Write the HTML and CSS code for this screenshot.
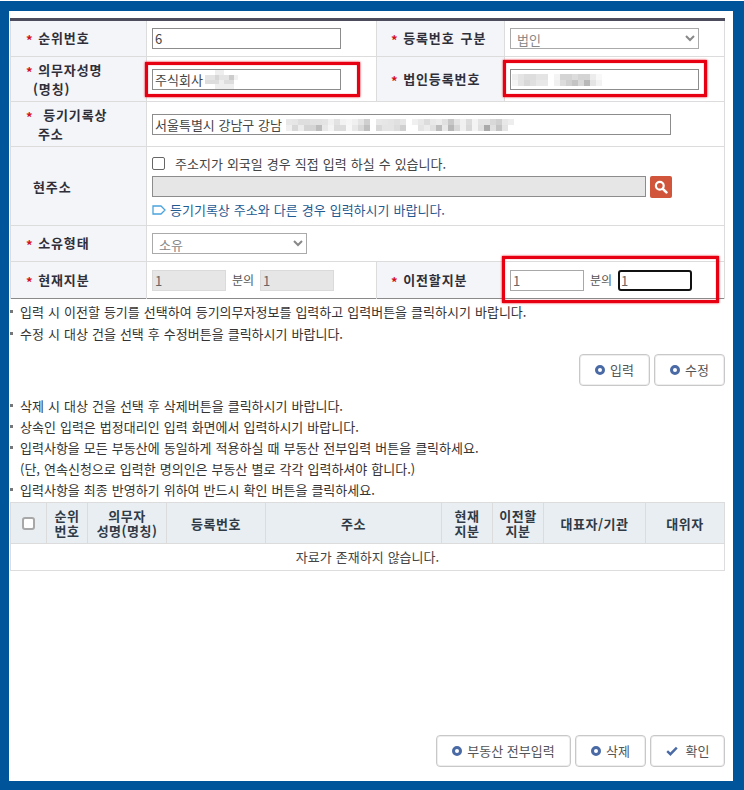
FILE: index.html
```html
<!DOCTYPE html>
<html lang="ko">
<head>
<meta charset="utf-8">
<title>등기의무자 입력</title>
<link rel="stylesheet" href="styles.css">
</head>
<body>
<main class="panel">
  <section class="form-wrap">
    <table class="form">
      <colgroup><col class="c1"><col class="c2"><col class="c3"><col></colgroup>
      <tr class="r1">
        <th><i>*</i> 순위번호</th>
        <td><input class="text w189" value="6"></td>
        <th class="th2"><i>*</i> 등록번호 구분</th>
        <td><select class="sel w189"><option>법인</option></select></td>
      </tr>
      <tr class="r2">
        <th><i>*</i> 의무자성명<br><span class="in1">(명칭)</span></th>
        <td><div class="masked"><input class="text w189" value="주식회사">
          <svg class="mosaic m-name" viewBox="0 0 8 4" aria-hidden="true"><rect x="2" width="2" height="1" fill="#eee"/><rect y="1" width="6" height="1" fill="#e4e4e4"/><rect x="2" y="1" width="1" height="1" fill="#d6d6d6"/><rect x="5" y="1" width="1" height="1" fill="#ccc"/><rect x="6" y="1" width="1" height="1" fill="#f2f2f2"/><rect y="2" width="6" height="1" fill="#ddd"/><rect x="3" y="2" width="1" height="1" fill="#eee"/><rect x="2" y="3" width="4" height="1" fill="#eee"/></svg></div></td>
        <th class="th2"><i>*</i> 법인등록번호</th>
        <td><div class="masked"><input class="text w189">
          <svg class="mosaic m-reg" viewBox="0 0 15 2" aria-hidden="true"><rect x="0" y="0" width="1" height="1" fill="#eee"/><rect x="1" y="0" width="1" height="1" fill="#e4e4e4"/><rect x="2" y="0" width="2" height="1" fill="#ddd"/><rect x="4" y="0" width="2" height="1" fill="#e4e4e4"/><rect x="7" y="0" width="1" height="1" fill="#f4f4f4"/><rect x="8" y="0" width="2" height="1" fill="#d4d4d4"/><rect x="10" y="0" width="1" height="1" fill="#dcdcdc"/><rect x="11" y="0" width="2" height="1" fill="#d4d4d4"/><rect x="13" y="0" width="1" height="1" fill="#ececec"/><rect x="14" y="0" width="1" height="1" fill="#f8f8f8"/><rect x="0" y="1" width="1" height="1" fill="#f4f4f4"/><rect x="1" y="1" width="1" height="1" fill="#e4e4e4"/><rect x="2" y="1" width="1" height="1" fill="#d8d8d8"/><rect x="3" y="1" width="1" height="1" fill="#e0e0e0"/><rect x="4" y="1" width="2" height="1" fill="#e8e8e8"/><rect x="7" y="1" width="1" height="1" fill="#f0f0f0"/><rect x="8" y="1" width="1" height="1" fill="#dcdcdc"/><rect x="9" y="1" width="1" height="1" fill="#d0d0d0"/><rect x="10" y="1" width="1" height="1" fill="#c4c4c4"/><rect x="11" y="1" width="1" height="1" fill="#d8d8d8"/><rect x="12" y="1" width="1" height="1" fill="#b8b8b8"/><rect x="13" y="1" width="1" height="1" fill="#e4e4e4"/><rect x="14" y="1" width="1" height="1" fill="#f2f2f2"/></svg></div></td>
      </tr>
      <tr class="r3">
        <th><span class="sp-star"><i>*</i></span> 등기기록상<br><span class="in2">주소</span></th>
        <td colspan="3"><div class="masked"><input class="text w519" value="서울특별시 강남구 강남">
          <svg class="mosaic m-addr" viewBox="0 0 38 2" aria-hidden="true"><rect x="0" y="0" width="1" height="1" fill="#e8e8e8"/><rect x="1" y="0" width="1" height="1" fill="#e6e6e6"/><rect x="2" y="0" width="2" height="1" fill="#dedede"/><rect x="4" y="0" width="2" height="1" fill="#e2e2e2"/><rect x="6" y="0" width="1" height="1" fill="#e4e4e4"/><rect x="7" y="0" width="1" height="1" fill="#f0f0f0"/><rect x="8" y="0" width="1" height="1" fill="#e2e2e2"/><rect x="9" y="0" width="1" height="1" fill="#f2f2f2"/><rect x="10" y="0" width="1" height="1" fill="#f6f6f6"/><rect x="11" y="0" width="1" height="1" fill="#f0f0f0"/><rect x="12" y="0" width="1" height="1" fill="#e4e4e4"/><rect x="13" y="0" width="1" height="1" fill="#cfcfcf"/><rect x="15" y="0" width="1" height="1" fill="#e8e8e8"/><rect x="16" y="0" width="1" height="1" fill="#e6e6e6"/><rect x="17" y="0" width="1" height="1" fill="#e4e4e4"/><rect x="18" y="0" width="1" height="1" fill="#e0e0e0"/><rect x="19" y="0" width="1" height="1" fill="#e6e6e6"/><rect x="21" y="0" width="1" height="1" fill="#f0f0f0"/><rect x="22" y="0" width="1" height="1" fill="#e8e8e8"/><rect x="23" y="0" width="1" height="1" fill="#dcdcdc"/><rect x="24" y="0" width="1" height="1" fill="#e8e8e8"/><rect x="25" y="0" width="1" height="1" fill="#ececec"/><rect x="26" y="0" width="1" height="1" fill="#e0e0e0"/><rect x="27" y="0" width="1" height="1" fill="#c8c8c8"/><rect x="28" y="0" width="1" height="1" fill="#e4e4e4"/><rect x="29" y="0" width="1" height="1" fill="#f0f0f0"/><rect x="30" y="0" width="1" height="1" fill="#dcdcdc"/><rect x="31" y="0" width="1" height="1" fill="#f4f4f4"/><rect x="32" y="0" width="2" height="1" fill="#e4e4e4"/><rect x="34" y="0" width="1" height="1" fill="#d8d8d8"/><rect x="35" y="0" width="1" height="1" fill="#d0d0d0"/><rect x="36" y="0" width="1" height="1" fill="#e8e8e8"/><rect x="37" y="0" width="1" height="1" fill="#eee"/><rect x="0" y="1" width="1" height="1" fill="#f0f0f0"/><rect x="1" y="1" width="1" height="1" fill="#d8d8d8"/><rect x="2" y="1" width="1" height="1" fill="#ececec"/><rect x="3" y="1" width="2" height="1" fill="#d4d4d4"/><rect x="5" y="1" width="1" height="1" fill="#bdbdbd"/><rect x="6" y="1" width="1" height="1" fill="#e8e8e8"/><rect x="7" y="1" width="1" height="1" fill="#f4f4f4"/><rect x="8" y="1" width="2" height="1" fill="#dcdcdc"/><rect x="10" y="1" width="1" height="1" fill="#f8f8f8"/><rect x="11" y="1" width="1" height="1" fill="#e8e8e8"/><rect x="12" y="1" width="1" height="1" fill="#d8d8d8"/><rect x="13" y="1" width="1" height="1" fill="#c0c0c0"/><rect x="15" y="1" width="1" height="1" fill="#d8d8d8"/><rect x="16" y="1" width="2" height="1" fill="#e4e4e4"/><rect x="18" y="1" width="1" height="1" fill="#dcdcdc"/><rect x="19" y="1" width="1" height="1" fill="#d0d0d0"/><rect x="22" y="1" width="1" height="1" fill="#e4e4e4"/><rect x="23" y="1" width="1" height="1" fill="#ececec"/><rect x="24" y="1" width="1" height="1" fill="#e0e0e0"/><rect x="25" y="1" width="1" height="1" fill="#bdbdbd"/><rect x="26" y="1" width="1" height="1" fill="#e8e8e8"/><rect x="27" y="1" width="1" height="1" fill="#b8b8b8"/><rect x="28" y="1" width="1" height="1" fill="#d8d8d8"/><rect x="29" y="1" width="1" height="1" fill="#f0f0f0"/><rect x="30" y="1" width="1" height="1" fill="#d8d8d8"/><rect x="31" y="1" width="1" height="1" fill="#f4f4f4"/><rect x="32" y="1" width="1" height="1" fill="#e0e0e0"/><rect x="33" y="1" width="1" height="1" fill="#aaa"/><rect x="34" y="1" width="1" height="1" fill="#e0e0e0"/><rect x="35" y="1" width="1" height="1" fill="#c4c4c4"/><rect x="36" y="1" width="1" height="1" fill="#e4e4e4"/></svg></div></td>
      </tr>
      <tr class="r4">
        <th><span class="in3">현주소</span></th>
        <td colspan="3" class="addr">
          <label class="chk-line"><input type="checkbox" class="chk"> 주소지가 외국일 경우 직접 입력 하실 수 있습니다.</label>
          <div class="search-line">
            <input class="text locked w494" disabled>
            <button class="search" type="button" aria-label="검색"><svg viewBox="0 0 14 14" width="14" height="14"><circle cx="5.8" cy="5.8" r="3.9" fill="none" stroke="#fff" stroke-width="2.2"/><path d="M8.8 8.8 12.4 12.4" stroke="#fff" stroke-width="2.6" stroke-linecap="round"/></svg></button>
          </div>
          <p class="hint"><svg viewBox="0 0 14 10" width="14" height="10" aria-hidden="true"><path d="M1 1h8l4 4-4 4H1z" fill="none" stroke="#4aa3dc" stroke-width="1.3"/></svg>등기기록상 주소와 다른 경우 입력하시기 바랍니다.</p>
        </td>
      </tr>
      <tr class="r5">
        <th><i>*</i> 소유형태</th>
        <td colspan="3"><select class="sel w155"><option>소유</option></select></td>
      </tr>
      <tr class="r6">
        <th><i>*</i> 현재지분</th>
        <td><div class="share"><input class="text locked-s w74" value="1" disabled><span>분의</span><input class="text locked-s w74" value="1" disabled></div></td>
        <th class="th2"><i>*</i> 이전할지분</th>
        <td><div class="share"><input class="text w74 plain" value="1"><span>분의</span><input class="text w74 focus" value="1"></div></td>
      </tr>
    </table>
    <div class="mark mark-a"></div>
    <div class="mark mark-b"></div>
    <div class="mark mark-c"></div>
  </section>

  <ul class="notes n1">
    <li>입력 시 이전할 등기를 선택하여 등기의무자정보를 입력하고 입력버튼을 클릭하시기 바랍니다.</li>
    <li>수정 시 대상 건을 선택 후 수정버튼을 클릭하시기 바랍니다.</li>
  </ul>

  <div class="btns mid">
    <button class="btn b70" type="button"><b class="dot"></b>입력</button>
    <button class="btn b70" type="button"><b class="dot"></b>수정</button>
  </div>

  <ul class="notes n2">
    <li>삭제 시 대상 건을 선택 후 삭제버튼을 클릭하시기 바랍니다.</li>
    <li>상속인 입력은 법정대리인 입력 화면에서 입력하시기 바랍니다.</li>
    <li>입력사항을 모든 부동산에 동일하게 적용하실 때 부동산 전부입력 버튼을 클릭하세요.</li>
    <li class="nob">(단, 연속신청으로 입력한 명의인은 부동산 별로 각각 입력하셔야 합니다.)</li>
    <li>입력사항을 최종 반영하기 위하여 반드시 확인 버튼을 클릭하세요.</li>
  </ul>

  <table class="list">
    <colgroup><col class="l1"><col class="l2"><col class="l3"><col class="l4"><col class="l5"><col class="l6"><col class="l7"><col class="l8"><col></colgroup>
    <thead>
      <tr>
        <th><input type="checkbox" class="chk chk-head"></th>
        <th>순위<br>번호</th>
        <th>의무자<br>성명(명칭)</th>
        <th>등록번호</th>
        <th>주소</th>
        <th>현재<br>지분</th>
        <th>이전할<br>지분</th>
        <th>대표자/기관</th>
        <th>대위자</th>
      </tr>
    </thead>
    <tbody>
      <tr><td colspan="9">자료가 존재하지 않습니다.</td></tr>
    </tbody>
  </table>

  <div class="btns foot">
    <button class="btn b134" type="button"><b class="dot"></b>부동산 전부입력</button>
    <button class="btn b70" type="button"><b class="dot"></b>삭제</button>
    <button class="btn b75" type="button"><svg class="check" viewBox="0 0 12 10" width="12" height="10" aria-hidden="true"><path d="M1.2 5.2 4.4 8.2 10.8 1.6" fill="none" stroke="#4a6aa5" stroke-width="2.4"/></svg>확인</button>
  </div>
</main>
</body>
</html>
```
FILE: styles.css
```css
* { box-sizing: border-box; }
html { margin: 0; height: 100%; background: #fff; }
body {
  margin: 1px 0 0;
  height: 789px;
  background: #00559a;
  padding: 10px 11px 9px 9px;
  font: 13px/1.2 "Noto Sans CJK KR", "Liberation Sans", sans-serif;
  word-spacing: 0.4px;
  color: #333;
  overflow: hidden;
}
.panel {
  background: #fff;
  height: 770px;
  padding: 7px 8px 14px 1px;
  display: flex;
  flex-direction: column;
}
.form-wrap { position: relative; width: 715px; }
.form {
  width: 715px;
  table-layout: fixed;
  border-collapse: collapse;
  border-top: 3px solid #4c4c5c;
  border-bottom: 1px solid #8a8a8a;
  border-left: 1px solid #ddd;
  border-right: 1px solid #ddd;
}
.c1 { width: 136px; }
.c2 { width: 230px; }
.c3 { width: 128px; }
.form th, .form td { border: 1px solid #dcdcdc; padding: 0 0 0 5px; }
.form tr:first-child th, .form tr:first-child td { border-top: 0; }
.form tr:last-child th, .form tr:last-child td { border-bottom: 0; }
.form th {
  background: #f4f5f8;
  font-weight: 700;
  text-align: left;
  padding-left: 15px;
  color: #2f2f3a;
  line-height: 17px;
  letter-spacing: 0.9px;
  word-spacing: 1.5px;
}
.form th.th2 { padding-left: 14px; }
.form i {
  color: #d4101c;
  font-style: normal;
  font-weight: 700;
  letter-spacing: -0.5px;
  vertical-align: -2px;
}
.sp-star { margin-right: 5px; }
.in1 { padding-left: 7px; }
.in2 { padding-left: 12px; }
.in3 { padding-left: 7px; }
.r1 { height: 37px; }
.r2 { height: 45px; }
.r3 { height: 45px; }
.r4 { height: 79px; }
.r5 { height: 36px; }
.r6 { height: 37px; }

.text {
  height: 21px;
  border: 1px solid #8c8c8c;
  background: #fff;
  padding: 0 2px;
  font: inherit;
  font-size: 13px;
  color: #444;
  display: block;
  border-radius: 0;
  outline: 0;
}
.w189 { width: 189px; }
.w519 { width: 519px; }
.w494 { width: 494px; }
.w74 { width: 74px; }
.w155 { width: 155px; }
.sel {
  display: block;
  height: 21px;
  border: 1px solid #aaa;
  background: #fff;
  font: inherit;
  color: #888;
  padding: 0 0 0 2px;
  border-radius: 0;
}
.locked { background: #e6e6e6; }
.locked-s { background: #e6e6e6; border-color: #dadada; color: #666; }
.plain { border-color: #a8a8a8; color: #666; }
.focus { border: 2px solid #111; border-radius: 3px; padding-left: 1px; color: #666; }
.masked { position: relative; width: fit-content; }
.mosaic { position: absolute; shape-rendering: crispEdges; }
.m-name { left: 53px; top: 1px; width: 38px; height: 19px; }
.m-reg { left: 2px; top: 4px; width: 90px; height: 14px; }
.m-addr { left: 134px; top: 5px; width: 228px; height: 12px; }

.addr { padding-top: 0; }
.chk-line { display: flex; align-items: center; gap: 10px; height: 20px; color: #444; }
.chk {
  appearance: none;
  width: 13px;
  height: 13px;
  margin: 0;
  background: #fff;
  border: 1px solid #666;
  border-radius: 2px;
}
.chk-head {
  display: block;
  margin: 0 auto;
  border: 2px solid #a8a8a8;
  border-radius: 3px;
}
.search-line { display: flex; gap: 4px; margin-top: 2px; }
.search {
  width: 22px;
  height: 22px;
  border: 0;
  border-radius: 2px;
  background: #d0553a;
  padding: 0;
  display: flex;
  align-items: center;
  justify-content: center;
}
.hint {
  margin: 3px 0 0;
  color: #1f5b92;
  display: flex;
  align-items: center;
  gap: 4px;
  height: 18px;
}
.share { display: flex; align-items: center; gap: 6px; color: #555; }
.share span { font-size: 12px; }

.mark { position: absolute; border: 3px solid #e60012; box-shadow: 0 0 2px #e60012, inset 0 0 1px #e60012; pointer-events: none; }
.mark-a { left: 135px; top: 44px; width: 215px; height: 35px; }
.mark-b { left: 493px; top: 42px; width: 204px; height: 37px; }
.mark-c { left: 492px; top: 238px; width: 217px; height: 47px; }

.notes { list-style: none; margin: 0; padding: 0 0 0 10px; color: #333; }
.notes li { height: 21px; line-height: 21px; position: relative; margin-left: -10px; padding-left: 10px; }
.notes li::before {
  content: "";
  position: absolute;
  left: 0;
  top: 9px;
  width: 3px;
  height: 3px;
  background: #777;
}
.notes li.nob::before { display: none; }
.n1 { margin-top: 2px; }
.n1 li:first-child { height: 22px; line-height: 22px; }

.btns { display: flex; justify-content: flex-end; gap: 4px; }
.mid { margin-top: 10px; margin-bottom: 9px; }
.foot { margin-top: auto; }
.btn {
  height: 32px;
  border: 1px solid #c8c8c8;
  box-shadow: inset 0 0 0 1px #eee;
  border-radius: 4px;
  background: #fff;
  font: inherit;
  color: #555;
  display: flex;
  align-items: center;
  justify-content: center;
  gap: 5px;
  padding: 0;
}
.b70 { width: 71px; }
.b75 { width: 75px; }
.b134 { width: 135px; }
.dot {
  width: 10px;
  height: 10px;
  border-radius: 50%;
  border: 3px solid #4a6aa5;
}
.check { margin-right: 3px; }

.list {
  width: 715px;
  table-layout: fixed;
  border-collapse: collapse;
  margin-top: 2px;
  border: 1px solid #ddd;
}
.l1 { width: 36px; }
.l2 { width: 41px; }
.l3 { width: 79px; }
.l4 { width: 99px; }
.l5 { width: 176px; }
.l6 { width: 51px; }
.l7 { width: 51px; }
.l8 { width: 102px; }
.list th {
  height: 41px;
  background: #e9eef3;
  border: 1px solid #dcdcdc;
  font-weight: 700;
  line-height: 15px;
  letter-spacing: 0.5px;
  color: #2f3a45;
  padding: 0;
  text-align: center;
}
.list td { height: 27px; text-align: center; color: #444; padding: 0; }
```
